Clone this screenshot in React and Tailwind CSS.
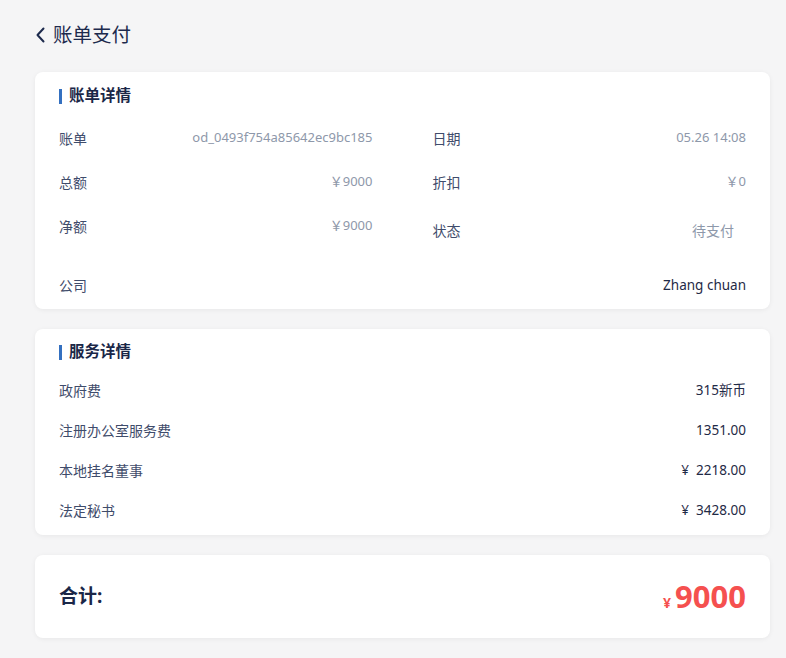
export default function App() {
  const font = { fontFamily: '"Noto Sans", "Noto Sans CJK SC", sans-serif' };
  const services = [
    ["政府费", "", "315新币"],
    ["注册办公室服务费", "", "1351.00"],
    ["本地挂名董事", "¥", "2218.00"],
    ["法定秘书", "¥", "3428.00"],
  ];
  return (
    <div style={font} className="h-[658px] overflow-hidden w-full bg-[#f5f5f6] pl-[35px] pr-[16px] pt-[21px] font-['Noto_Sans','Noto_Sans_CJK_SC',sans-serif]">
      <div className="flex h-[28px] items-center mb-[23px] text-[#1d2a4d]">
        <svg width="12" height="16" viewBox="0 0 12 16" className="mr-[6px]">
          <path d="M8.5 1.5 L2.5 8 L8.5 14.5" fill="none" stroke="#1d2a4d" strokeWidth="2" strokeLinecap="round" strokeLinejoin="round" />
        </svg>
        <span className="text-[19.5px] leading-[28px]">账单支付</span>
      </div>

      <div className="rounded-[8px] bg-white shadow-[0_1px_5px_rgba(0,0,0,0.06)] px-6 pt-[12px] pb-[4px]">
        <div className="flex items-center h-[24px]">
          <div className="w-[3px] h-[15px] bg-[#3470c0] mr-[7px]" />
          <span className="text-[15.5px] font-bold text-[#1b2748]">账单详情</span>
        </div>
        <div className="grid grid-cols-2 gap-x-[60px] mt-[8px]">
          <div className="flex h-[44px] items-center justify-between">
            <span className="text-[14px] text-[#3f4c6b]">账单</span>
            <span className="text-[13px] text-[#8e98aa]">od_0493f754a85642ec9bc185</span>
          </div>
          <div className="flex h-[44px] items-center justify-between">
            <span className="text-[14px] text-[#3f4c6b]">日期</span>
            <span className="text-[13px] text-[#8e98aa]">05.26 14:08</span>
          </div>
          <div className="flex h-[44px] items-center justify-between">
            <span className="text-[14px] text-[#3f4c6b]">总额</span>
            <span className="text-[13px] text-[#8e98aa]">￥9000</span>
          </div>
          <div className="flex h-[44px] items-center justify-between">
            <span className="text-[14px] text-[#3f4c6b]">折扣</span>
            <span className="text-[13px] text-[#8e98aa]">￥0</span>
          </div>
          <div className="flex h-[44px] items-center justify-between self-start">
            <span className="text-[14px] text-[#3f4c6b]">净额</span>
            <span className="text-[13px] text-[#8e98aa]">￥9000</span>
          </div>
          <div className="flex h-[52px] items-center justify-between">
            <span className="text-[14px] text-[#3f4c6b]">状态</span>
            <span className="text-[14px] text-[#8e98aa] pr-3">待支付</span>
          </div>
        </div>
        <div className="flex h-[40px] items-center justify-between mt-[9px]">
          <span className="text-[14px] text-[#3f4c6b]">公司</span>
          <span className="text-[13.5px] text-[#1f2a46]">Zhang chuan</span>
        </div>
      </div>

      <div className="mt-[20px] rounded-[8px] bg-white shadow-[0_1px_5px_rgba(0,0,0,0.06)] px-6 pt-[11px] pb-[5px]">
        <div className="flex items-center h-[24px]">
          <div className="w-[3px] h-[15px] bg-[#3470c0] mr-[7px]" />
          <span className="text-[15.5px] font-bold text-[#1b2748]">服务详情</span>
        </div>
        <div className="mt-[6px] flex flex-col">
          {services.map(([k, c, v]) => (
            <div key={k} className="flex h-[40px] items-center justify-between">
              <span className="text-[14px] text-[#3f4c6b]">{k}</span>
              <span className="text-[13.5px] text-[#1f2a46]">
                {c && <span className="mr-[7px]">{c}</span>}
                {v}
              </span>
            </div>
          ))}
        </div>
      </div>

      <div className="mt-[20px] flex h-[83px] items-center justify-between rounded-[8px] bg-white shadow-[0_1px_5px_rgba(0,0,0,0.06)] px-6">
        <span className="text-[19px] font-bold text-[#1b2748]">合计:</span>
        <span className="flex items-baseline text-[#f5504f] font-bold">
          <span className="text-[14px] mr-[4px]">¥</span>
          <span className="text-[31px] leading-none">9000</span>
        </span>
      </div>
    </div>
  );
}
